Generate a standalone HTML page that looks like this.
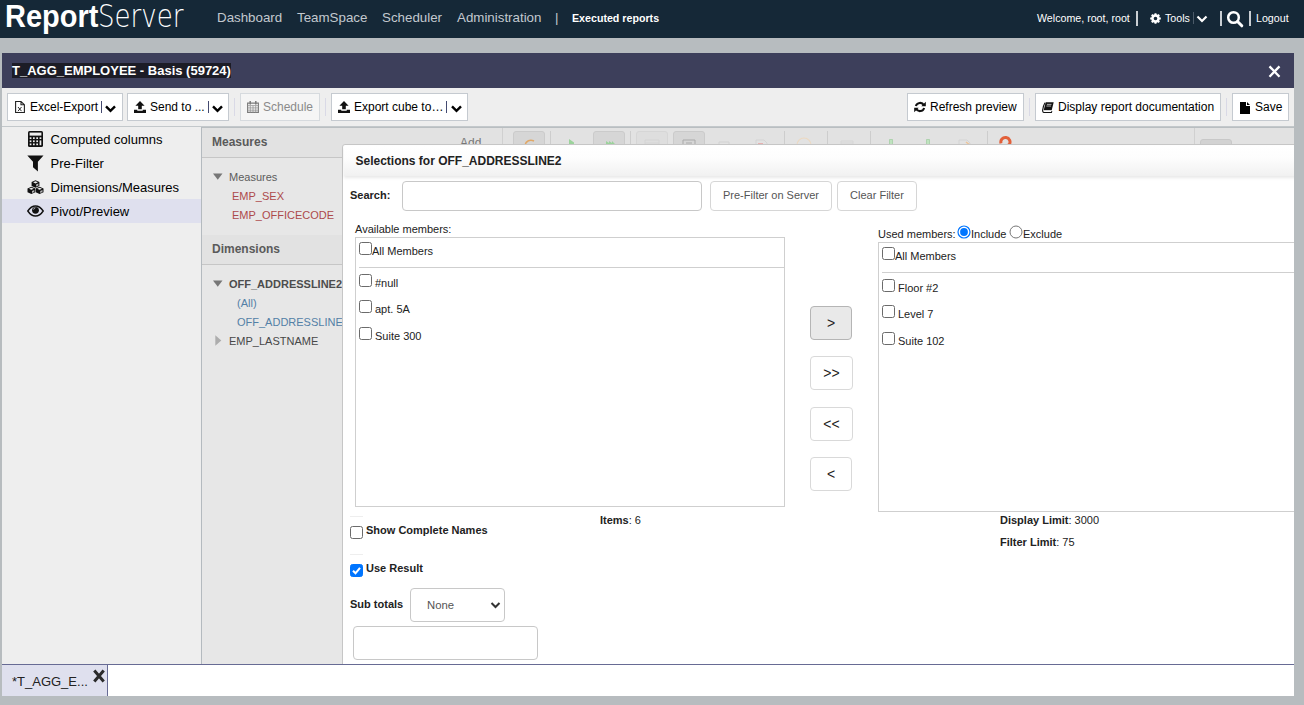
<!DOCTYPE html>
<html lang="en">
<head>
<meta charset="utf-8">
<title>ReportServer</title>
<style>
*{box-sizing:border-box;margin:0;padding:0}
html,body{width:1304px;height:705px;overflow:hidden}
body{background:#b7bcbf;font-family:"Liberation Sans",Arial,sans-serif;font-size:13px;color:#222;position:relative}
.abs{position:absolute}
/* header */
#hdr{left:0;top:0;width:1304px;height:38px;background:#152837}
.logo{top:-3px;height:38px;line-height:38px;color:#fff;font-size:32px;white-space:nowrap;transform-origin:0 50%}
#logo1{left:5px;font-weight:bold;transform:scaleX(0.905)}
#logo2{left:98px;font-family:"DejaVu Sans Light","DejaVu Sans","Liberation Sans",sans-serif;font-weight:200;transform:scaleX(0.815)}
.nav{top:0;height:36px;line-height:36px;color:#c3c9cf;font-size:13.33px;white-space:nowrap}
.navw{color:#fff;font-size:10.67px;font-weight:bold}
.hr{top:0;height:36px;line-height:37px;color:#fff;font-size:10.67px;white-space:nowrap}
.vbar{background:#c9ced3;width:1px}
/* window */
#win{left:2px;top:53px;width:1292px;height:643px;background:#fff}
#title{left:2px;top:53px;width:1292px;height:35px;background:#3d3f5b}
#title .t{left:10px;top:10px;height:15px;line-height:15px;background:#1c1c26;color:#fff;font-weight:bold;font-size:13px;white-space:nowrap}
#tb{left:2px;top:88px;width:1292px;height:39px;background:#eeeeee;border-bottom:1px solid #c3c8cb}
.btn{top:93px;height:28px;background:#fff;border:1px solid #c5cad0;line-height:26px;font-size:12px;color:#000;white-space:nowrap}
.btn.dis{background:#f5f5f5;color:#8a8a8a;border-color:#d6dade}
.btn .lbl{position:absolute;top:0}
.sep{top:98px;width:1px;height:18px;background:#d9d9e6}
/* left nav */
#lnav{left:2px;top:127px;width:199px;height:537px;background:#eeeeee}
.li{left:2px;width:199px;height:24px;line-height:24px;font-size:13px;color:#000}
.li span{position:absolute;left:48.500px;top:1px;white-space:nowrap}
.li svg{position:absolute}
.li.sel{background:#dfe0ee}
/* mid */
#mid{left:201px;top:127px;width:142px;height:537px;background:#e7e7e7;border-left:1px solid #b4babf}
.mh{left:202px;width:1092px;height:31px;background:#e2e2e2;border-bottom:1px solid #c6c6c6;color:#5a5a5a;font-weight:bold;font-size:12px;line-height:31px;padding-left:10px}
.tr{font-size:11px;white-space:nowrap;height:14px;line-height:14px}
/* dialog */
#dlg{left:342px;top:144px;width:960px;height:521px;background:#fff;border:1px solid #c6c6c6;border-radius:3px 0 0 0}
#dlgh{left:344px;top:146px;width:960px;height:30px;background:linear-gradient(#ffffff 0,#fdfdfd 40%,#f1f1f1 100%);box-shadow:0 2px 3px rgba(0,0,0,.09)}
#dlgh b{position:absolute;left:11.500px;top:8px;font-size:12px;line-height:14px;color:#222}
.inp{background:#fff;border:1px solid #c8c8c8;border-radius:4px}
.gbtn{background:#fff;border:1px solid #d6d6d6;border-radius:4px;color:#555;font-size:11px;text-align:center;white-space:nowrap}
.mv{background:#fff;border:1px solid #d9d9d9;border-radius:4px;color:#222;font-size:14px;text-align:center;line-height:32px;width:42px;height:34px}
.box{border:1px solid #cfcfcf;background:#fff}
.cb{width:13px;height:13px;border:1px solid #6b6b6b;border-radius:2.5px;background:#fff}
.t11{font-size:11px;line-height:13px;white-space:nowrap;color:#222}
.hl{height:1px;background:#cfcfcf}
/* bottom */
#bot{left:2px;top:664px;width:1292px;height:32px;background:#fff;border-top:1px solid #676b94}
#tab{left:2px;top:665px;width:106px;height:31px;background:#dfe0ee;border-right:1px solid #676b94}
</style>
</head>
<body>
<div id="hdr" class="abs"></div>
<div id="logo1" class="abs logo">Report</div><div id="logo2" class="abs logo">Server</div>
<div class="abs nav" style="left:217px">Dashboard</div>
<div class="abs nav" style="left:297px">TeamSpace</div>
<div class="abs nav" style="left:382px">Scheduler</div>
<div class="abs nav" style="left:457px">Administration</div>
<div class="abs nav" style="left:555px">|</div>
<div class="abs nav navw" style="left:572px">Executed reports</div>
<div class="abs hr" style="left:1037px">Welcome, root, root</div>
<div class="abs vbar" style="left:1136px;top:11px;height:15px;width:2px"></div>
<svg class="abs" style="left:1150px;top:13px" width="11" height="11" viewBox="0 0 11 11"><path fill="#fff" fill-rule="evenodd" d="M9.66 4.43 L10.82 4.57 L10.82 6.43 L9.66 6.57 L9.20 7.69 L9.92 8.61 L8.61 9.92 L7.69 9.20 L6.57 9.66 L6.43 10.82 L4.57 10.82 L4.43 9.66 L3.31 9.20 L2.39 9.92 L1.08 8.61 L1.80 7.69 L1.34 6.57 L0.18 6.43 L0.18 4.57 L1.34 4.43 L1.80 3.31 L1.08 2.39 L2.39 1.08 L3.31 1.80 L4.43 1.34 L4.57 0.18 L6.43 0.18 L6.57 1.34 L7.69 1.80 L8.61 1.08 L9.92 2.39 L9.20 3.31Z M5.500 3.700 A1.800 1.800 0 1 0 5.500 7.300 A1.800 1.800 0 1 0 5.500 3.700Z"/></svg>
<div class="abs hr" style="left:1165px">Tools</div>
<div class="abs vbar" style="left:1193px;top:12px;height:12px;background:#4b5a68"></div>
<svg class="abs" style="left:1196px;top:14px" width="12" height="10" viewBox="0 0 12 10"><path d="M1.500 2.500 L6 7 L10.500 2.500" fill="none" stroke="#fff" stroke-width="2.200"/></svg>
<div class="abs vbar" style="left:1220px;top:11px;height:15px;width:2px"></div>
<svg class="abs" style="left:1226px;top:10px" width="18" height="18" viewBox="0 0 18 18"><circle cx="7.500" cy="7.500" r="5.300" fill="none" stroke="#fff" stroke-width="2.500"/><path d="M11.500 11.500 L15.800 15.800" stroke="#fff" stroke-width="3" stroke-linecap="round"/></svg>
<div class="abs vbar" style="left:1249px;top:11px;height:15px;width:2px"></div>
<div class="abs hr" style="left:1256px">Logout</div>

<div id="win" class="abs"></div>
<div id="title" class="abs"><div class="abs t">T_AGG_EMPLOYEE - Basis (59724)</div>
<svg class="abs" style="left:1266px;top:12px" width="13" height="13" viewBox="0 0 13 13"><path d="M1.500 1.400 L11.500 11.700 M11.500 1.400 L1.500 11.700" stroke="#fff" stroke-width="2.300"/></svg>
</div>
<div id="tb" class="abs"></div>

<!-- toolbar buttons -->
<div class="abs btn" style="left:7px;width:116px"><svg class="abs" style="left:7px;top:7px" width="10" height="12" viewBox="0 0 10 13" preserveAspectRatio="none"><path d="M.6.600h5.400l3.400 3.400v8.400H.6z M6 .6v3.400h3.400" fill="none" stroke="#222" stroke-width="1.100"/><path d="M3 6.500l3.500 4.500M6.500 6.500L3 11" stroke="#222" stroke-width="1"/></svg><span class="lbl" style="left:22px">Excel-Export</span><i class="abs" style="left:93px;top:7px;width:1px;height:12px;background:#444a70"></i><svg class="abs" style="left:96px;top:9px" width="13" height="10" viewBox="0 0 13 10"><path d="M2 3.300 L6.500 7.800 L11 3.300" fill="none" stroke="#000" stroke-width="2.400"/></svg></div>
<div class="abs btn" style="left:127px;width:102px"><svg class="abs" style="left:6px;top:7px" width="12" height="12" viewBox="0 0 12 12"><path d="M6 0L10.600 4.800H7.800V8.300H4.200V4.800H1.400z M0 8.800H3.300V9.700H8.700V8.800H12V12H0z" fill="#111"/></svg><span class="lbl" style="left:22px">Send to ...</span><i class="abs" style="left:80px;top:7px;width:1px;height:12px;background:#444a70"></i><svg class="abs" style="left:83px;top:9px" width="13" height="10" viewBox="0 0 13 10"><path d="M2 3.300 L6.500 7.800 L11 3.300" fill="none" stroke="#000" stroke-width="2.400"/></svg></div>
<div class="abs sep" style="left:234px"></div>
<div class="abs btn dis" style="left:240px;width:80px"><svg class="abs" style="left:6px;top:7px" width="12" height="12" viewBox="0 0 12 12"><path d="M0.600 2.100h10.800v9.300h-10.800z" fill="none" stroke="#7a7a7a" stroke-width="1.100"/><path d="M0.600 4.600h10.800M0.600 6.900h10.800M0.600 9.200h10.800M3.300 4.600v7M6 4.600v7M8.700 4.600v7" stroke="#909090" stroke-width=".75"/><path d="M3.200 .4v2.600M8.800 .4v2.600" stroke="#7a7a7a" stroke-width="1.500" stroke-linecap="round"/></svg><span class="lbl" style="left:22px">Schedule</span></div>
<div class="abs sep" style="left:325px"></div>
<div class="abs btn" style="left:331px;width:137px"><svg class="abs" style="left:6px;top:7px" width="12" height="12" viewBox="0 0 12 12"><path d="M6 0L10.600 4.800H7.800V8.300H4.200V4.800H1.400z M0 8.800H3.300V9.700H8.700V8.800H12V12H0z" fill="#111"/></svg><span class="lbl" style="left:22px">Export cube to…</span><i class="abs" style="left:114px;top:7px;width:1px;height:12px;background:#444a70"></i><svg class="abs" style="left:118px;top:9px" width="13" height="10" viewBox="0 0 13 10"><path d="M2 3.300 L6.500 7.800 L11 3.300" fill="none" stroke="#000" stroke-width="2.400"/></svg></div>

<div class="abs btn" style="left:907px;width:117px"><svg class="abs" style="left:6px;top:7px" width="12" height="12" viewBox="0 0 13 13"><path d="M10.800 4.500A4.800 4.800 0 0 0 2 5.500M2.200 8.500A4.800 4.800 0 0 0 11 7.500" fill="none" stroke="#111" stroke-width="2.200"/><path d="M12.800 .8v4.900H7.900z M.2 12.200V7.300H5.100z" fill="#111"/></svg><span class="lbl" style="left:22px">Refresh preview</span></div>
<div class="abs btn" style="left:1035px;width:186px"><svg class="abs" style="left:6px;top:8px" width="12" height="11" viewBox="0 0 13 12"><path d="M4 .3h8.700L10.500 9H1.800z" fill="#111"/><path d="M3.200 .8C1.800 3 .9 6.500 .6 9.200c0 1.400.8 2.300 2 2.300h7.600l.5-1.600" fill="none" stroke="#111" stroke-width="1.200"/><path d="M5.300 2.600h5M4.800 4.400h5" stroke="#e8e8e8" stroke-width=".8"/><path d="M2.200 9.900h7.800" stroke="#fff" stroke-width=".8"/></svg><span class="lbl" style="left:22px">Display report documentation</span></div>
<div class="abs sep" style="left:1226px"></div><div class="abs sep" style="left:1029px"></div>
<div class="abs btn" style="left:1232px;width:57px"><svg class="abs" style="left:7px;top:8px" width="10" height="12" viewBox="0 0 10 12"><path d="M0 0h6v4h4v8H0z M7 0l3 3H7z" fill="#000"/></svg><span class="lbl" style="left:22px">Save</span></div>

<!-- left nav -->
<div id="lnav" class="abs"></div>
<div class="abs li" style="top:127px"><svg style="left:26px;top:4px" width="15" height="16" viewBox="0 0 15 16"><rect x="0" y="0" width="15" height="16" rx="1.600" fill="#111"/><rect x="1.600" y="1.600" width="11.800" height="3" fill="#eee"/><g fill="#eee"><rect x="1.700" y="6.300" width="1.700" height="1.700"/><rect x="5" y="6.300" width="1.700" height="1.700"/><rect x="8.300" y="6.300" width="1.700" height="1.700"/><rect x="11.600" y="6.300" width="1.700" height="1.700"/><rect x="1.700" y="9.400" width="1.700" height="1.700"/><rect x="5" y="9.400" width="1.700" height="1.700"/><rect x="8.300" y="9.400" width="1.700" height="1.700"/><rect x="1.700" y="12.500" width="1.700" height="1.700"/><rect x="5" y="12.500" width="1.700" height="1.700"/><rect x="8.300" y="12.500" width="1.700" height="1.700"/><rect x="11.600" y="9.400" width="1.700" height="4.800"/></g></svg><span>Computed columns</span></div>
<div class="abs li" style="top:151px"><svg style="left:25px;top:4px" width="17" height="17" viewBox="0 0 17 17"><path d="M.3 .4H16.500L10.900 6.800V16.400L6 12.300V6.800z" fill="#111"/></svg><span>Pre-Filter</span></div>
<div class="abs li" style="top:175px"><svg style="left:25px;top:5px" width="17" height="15" viewBox="0 0 17 15"><g fill="#111"><path d="M8.500 .3l3.900 1.700v3.900l-3.900 1.800-3.900-1.800V2z"/><path d="M4.400 6.700l3.900 1.700v3.900l-3.900 1.800-3.900-1.800V8.400z"/><path d="M12.600 6.700l3.900 1.700v3.900l-3.900 1.800-3.900-1.800V8.400z"/></g><g fill="#eee"><path d="M8.500 1.300l2.400 1-2.400 1.100-2.400-1.100z"/><path d="M4.400 7.700l2.400 1-2.400 1.100-2.400-1.100z"/><path d="M12.600 7.700l2.400 1-2.400 1.100-2.400-1.100z"/><path d="M9.100 4.500l2.300-1v2l-2.300 1.100z" opacity=".75"/><path d="M5 10.900l2.300-1v2l-2.300 1.100z" opacity=".75"/><path d="M13.200 10.900l2.300-1v2l-2.300 1.100z" opacity=".75"/></g></svg><span>Dimensions/Measures</span></div>
<div class="abs li sel" style="top:199px"><svg style="left:25px;top:6px" width="17" height="12" viewBox="0 0 17 12"><path d="M.8 6C3 2.600 5.700 1 8.500 1s5.500 1.600 7.700 5c-2.200 3.400-4.900 5-7.700 5S3 9.400.8 6z" fill="none" stroke="#111" stroke-width="1.400"/><circle cx="8.500" cy="5.300" r="3.400" fill="#111"/><path d="M6.600 4.600a2 2 0 0 1 1.800-1.800" fill="none" stroke="#dfe0ee" stroke-width=".8"/></svg><span>Pivot/Preview</span></div>

<!-- middle (masked) -->
<div id="mid" class="abs"></div>
<div class="abs mh" style="top:127px;border-top:1px solid #b9bec1;line-height:29px">Measures</div>
<div class="abs mh" style="top:235px;width:141px;height:30px;line-height:28px">Dimensions</div>
<div class="abs" style="left:460px;top:136px;font-size:12px;color:#777">Add</div>
<!-- faded pivot toolbar -->
<div class="abs" style="left:502px;top:128px;width:1px;height:17px;background:#d0d0d0"></div>
<div class="abs" style="left:513px;top:131px;width:32px;height:20px;background:#d6d6d6;border:1px solid #cbcbcb;border-radius:3px"></div>
<div class="abs" style="left:593px;top:131px;width:32px;height:20px;background:#d6d6d6;border:1px solid #cbcbcb;border-radius:3px"></div>
<div class="abs" style="left:636px;top:131px;width:32px;height:20px;background:#dedede;border:1px solid #d6d6d6;border-radius:3px"></div>
<div class="abs" style="left:673px;top:131px;width:32px;height:20px;background:#d6d6d6;border:1px solid #cbcbcb;border-radius:3px"></div>
<div class="abs" style="left:1200px;top:139px;width:32px;height:12px;background:#d2d2d2;border:1px solid #c8c8c8;border-radius:3px"></div>
<div class="abs" style="left:1194px;top:128px;width:1px;height:17px;background:#d0d0d0"></div>
<svg class="abs" style="left:500px;top:128px" width="520" height="17" viewBox="500 128 520 17"><g stroke="#cdcdcd" stroke-width="1"><path d="M550.500 131v14M630.500 131v14M784.500 131v14M827.500 131v14M870.500 131v14M987.500 131v14"/></g><path d="M525 145c1-4 5-6 9-4" fill="none" stroke="#e0a868" stroke-width="1.500"/><path d="M569 139l5 3.500v2.500h-5z" fill="#9bd39b"/><path d="M606 141l3 2 0-2 3 2 0-2 3 3v1h-9z" fill="#9bd39b"/><path d="M645 140h14v5M645 140v5M645 143h14" fill="none" stroke="#d4d4d4" stroke-width="1"/><path d="M683 140h12v5M683 140v5M686 143h6" fill="none" stroke="#aaa" stroke-width="1"/><path d="M719 142h10v3M719 142v3" fill="none" stroke="#d2d2d2" stroke-width="1"/><path d="M756 145v-5h8l3 3v2" fill="none" stroke="#d4d4d4" stroke-width="1"/><path d="M758 144h5" stroke="#e9a0a0" stroke-width="1.500"/><path d="M797 145a7 7 0 0 1 14 0" fill="none" stroke="#ecd9c2" stroke-width="1.200"/><path d="M841 145v-4h12v4M841 143h12" fill="none" stroke="#d6d6d6" stroke-width="1"/><path d="M889.500 139.500h3v6h-3zM926.500 139.500h3v6h-3z" fill="#bfe3bf" stroke="#a5cfa5" stroke-width=".8"/><path d="M959 145v-5h8l3 3v2" fill="none" stroke="#d4d4d4" stroke-width="1"/><path d="M966 142l4 3" stroke="#edc59a" stroke-width="1.500"/><path d="M1001 143.300a4.600 4.600 0 1 1 8.300 1.200l-3.500 1.800" fill="none" stroke="#e2603a" stroke-width="3"/></svg>

<!-- tree -->
<svg class="abs" style="left:213px;top:173px" width="10" height="8" viewBox="0 0 10 8"><path d="M0 .5h9.500L4.750 6.800z" fill="#777"/></svg>
<div class="abs tr" style="left:229px;top:170px;color:#5c5c5c">Measures</div>
<div class="abs tr" style="left:232px;top:189px;color:#ad4a4b">EMP_SEX</div>
<div class="abs tr" style="left:232px;top:208px;color:#ad4a4b">EMP_OFFICECODE</div>
<svg class="abs" style="left:213px;top:280px" width="10" height="8" viewBox="0 0 10 8"><path d="M0 .5h9.500L4.750 6.800z" fill="#777"/></svg>
<div class="abs tr" style="left:229px;top:277px;color:#4d4d4d;font-weight:bold">OFF_ADDRESSLINE2</div>
<div class="abs tr" style="left:237px;top:296px;color:#5380a6">(All)</div>
<div class="abs tr" style="left:237px;top:315px;color:#5380a6">OFF_ADDRESSLINE2</div>
<svg class="abs" style="left:215px;top:335px" width="7" height="11" viewBox="0 0 7 11"><path d="M.3 .3v10.400L6.300 5.500z" fill="#adadad"/></svg>
<div class="abs tr" style="left:229px;top:334px;color:#484848">EMP_LASTNAME</div>

<!-- dialog -->
<div id="dlg" class="abs"></div>
<div id="dlgh" class="abs"><b>Selections for OFF_ADDRESSLINE2</b></div>
<div class="abs t11" style="left:350px;top:189px;font-weight:bold">Search:</div>
<div class="abs inp" style="left:402px;top:181px;width:300px;height:30px"></div>
<div class="abs gbtn" style="left:710px;top:181px;width:122px;height:30px;line-height:27px">Pre-Filter on Server</div>
<div class="abs gbtn" style="left:837px;top:181px;width:80px;height:30px;line-height:27px">Clear Filter</div>

<div class="abs t11" style="left:355px;top:223px">Available members:</div>
<div class="abs box" style="left:355px;top:237px;width:430px;height:270px"></div>
<div class="abs cb" style="left:359px;top:242px"></div>
<div class="abs t11" style="left:372px;top:245px">All Members</div>
<div class="abs hl" style="left:359px;top:267px;width:425px"></div>
<div class="abs cb" style="left:359px;top:274px"></div>
<div class="abs t11" style="left:375px;top:277px">#null</div>
<div class="abs cb" style="left:359px;top:300px"></div>
<div class="abs t11" style="left:375px;top:303px">apt. 5A</div>
<div class="abs cb" style="left:359px;top:327px"></div>
<div class="abs t11" style="left:375px;top:330px">Suite 300</div>

<div class="abs mv" style="left:810px;top:306px;background:#e9e9e9;border-color:#b5b5b5">&gt;</div>
<div class="abs mv" style="left:810px;top:356px;width:43px">&gt;&gt;</div>
<div class="abs mv" style="left:810px;top:407px;width:43px">&lt;&lt;</div>
<div class="abs mv" style="left:810px;top:457px">&lt;</div>

<div class="abs t11" style="left:878px;top:228px">Used members:</div>
<svg class="abs" style="left:957px;top:225px" width="14" height="14" viewBox="0 0 14 14"><circle cx="7" cy="7" r="6" fill="#fff" stroke="#0075ff" stroke-width="1.200"/><circle cx="7" cy="7" r="3.900" fill="#0075ff"/></svg>
<div class="abs t11" style="left:971px;top:228px">Include</div>
<svg class="abs" style="left:1009px;top:225px" width="14" height="14" viewBox="0 0 14 14"><circle cx="7" cy="7" r="6" fill="#fff" stroke="#767676" stroke-width="1"/></svg>
<div class="abs t11" style="left:1023px;top:228px">Exclude</div>
<div class="abs box" style="left:878px;top:242px;width:420px;height:270px;border-right:none"></div>
<div class="abs cb" style="left:882px;top:247px"></div>
<div class="abs t11" style="left:895px;top:250px">All Members</div>
<div class="abs hl" style="left:882px;top:272px;width:412px"></div>
<div class="abs cb" style="left:882px;top:279px"></div>
<div class="abs t11" style="left:898px;top:282px">Floor #2</div>
<div class="abs cb" style="left:882px;top:305px"></div>
<div class="abs t11" style="left:898px;top:308px">Level 7</div>
<div class="abs cb" style="left:882px;top:332px"></div>
<div class="abs t11" style="left:898px;top:335px">Suite 102</div>

<div class="abs t11" style="left:600px;top:514px"><b>Items</b>: 6</div>
<div class="abs t11" style="left:1000px;top:514px"><b>Display Limit</b>: 3000</div>
<div class="abs t11" style="left:1000px;top:536px"><b>Filter Limit</b>: 75</div>

<div class="abs cb" style="left:350px;top:526px"></div>
<div class="abs t11" style="left:366px;top:524px;font-weight:bold">Show Complete Names</div>
<div class="abs cb" style="left:350px;top:564px;background:#0075ff;border-color:#0075ff"><svg class="abs" style="left:0;top:0" width="11" height="11" viewBox="0 0 11 11"><path d="M2 5.800l2.500 2.500L9 2.800" fill="none" stroke="#fff" stroke-width="2.100"/></svg></div>
<div class="abs t11" style="left:366px;top:562px;font-weight:bold">Use Result</div>
<div class="abs t11" style="left:350px;top:598px;font-weight:bold">Sub totals</div>
<div class="abs inp" style="left:410px;top:588px;width:95px;height:34px"></div>
<div class="abs" style="left:427px;top:599px;font-size:11.300px;color:#555">None</div>
<svg class="abs" style="left:490px;top:601px" width="11" height="9" viewBox="0 0 11 9"><path d="M1.500 2l4 4 4-4" fill="none" stroke="#333" stroke-width="2"/></svg><div class="abs" style="left:350px;top:516px;width:13px;height:1px;background:#eee"></div><div class="abs" style="left:350px;top:554px;width:13px;height:1px;background:#eee"></div>
<div class="abs inp" style="left:353px;top:626px;width:185px;height:34px"></div>

<!-- window overflow cover on right -->
<div class="abs" style="left:1294px;top:38px;width:10px;height:667px;background:#b7bcbf"></div>

<!-- bottom -->
<div id="bot" class="abs"></div>
<div id="tab" class="abs"><div class="abs" style="left:10px;top:9px;font-size:13px;color:#222;white-space:nowrap">*T_AGG_E...</div>
<svg class="abs" style="left:91px;top:4px" width="12" height="14" viewBox="0 0 12 14"><path d="M1.300 1.500L10.700 12.500M10.700 1.500L1.300 12.500" stroke="#2b2b2b" stroke-width="3"/></svg></div>
</body>
</html>
